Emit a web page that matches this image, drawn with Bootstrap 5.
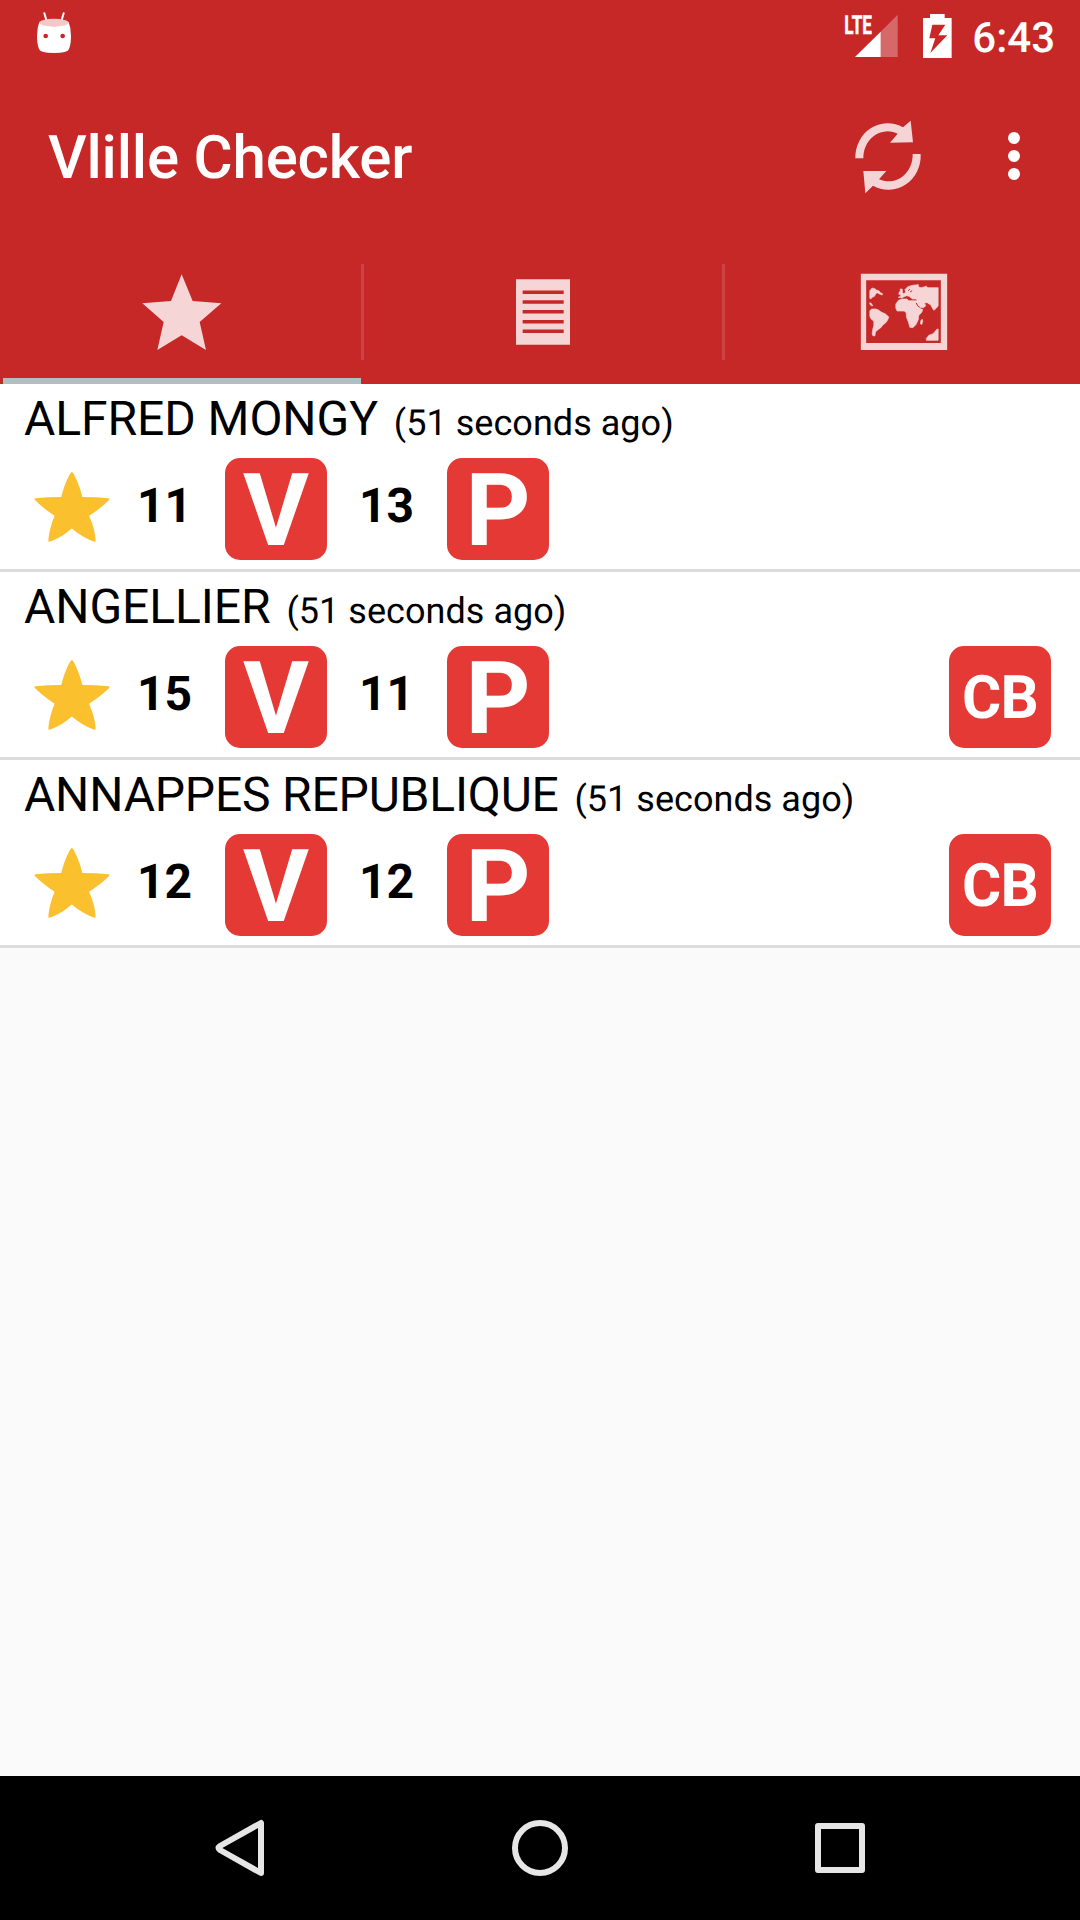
<!DOCTYPE html>
<html lang="en">
<head>
<meta charset="utf-8">
<meta name="viewport" content="width=device-width, initial-scale=1">
<title>Vlille Checker</title>
<link href="https://cdn.jsdelivr.net/npm/bootstrap@5.3.0/dist/css/bootstrap.min.css" rel="stylesheet">
<style>
  body { font-family: Roboto, "Noto Sans", sans-serif; background: #fafafa; color: #000; width: 1080px; height: 1920px; overflow: hidden; text-rendering: geometricPrecision; }
  svg { display: block; flex: none; overflow: visible; }
  .app-head { background: #c62828; color: #fff; height: 384px; }
  .status-bar { height: 72px; padding: 11px 25px 0 35px; }
  .status-right { padding-top: 3px; }
  .clock { font-size: 42px; font-weight: 500; line-height: 49px; margin-left: 21px; }
  .batt { margin-left: 25px; }
  .app-bar { height: 168px; padding: 0 60px 0 48px; }
  .app-title { font-size: 60px; font-weight: 500; line-height: 70px; margin-top: 4px; letter-spacing: -.2px; }
  .bar-actions { gap: 85px; }
  .tab-strip { height: 144px; padding-left: 3px; overflow: hidden; }
  .tab-item { flex: 0 0 358px; height: 144px; border-bottom: 6px solid transparent; }
  .tab-item.current { border-bottom-color: #b0bec5; }
  .tab-sep { flex: 0 0 3px; height: 96px; margin-top: 24px; background: rgba(255,255,255,.13); }
  .station-list .station { height: 188px; background: #fff; border: 0; border-bottom: 3px solid #dcdcdc; padding: 0 29px 0 24px; color: #000; border-radius: 0; }
  .station-name { font-size: 48px; line-height: 69px; height: 74px; white-space: nowrap; letter-spacing: -.06px; }
  .long-name { letter-spacing: -.19px; }
  .ago { font-size: 36px; margin-left: 4px; letter-spacing: .04px; }
  .fav { margin: 14px 0 0 10px; }
  .count { font-size: 48px; font-weight: 700; line-height: 95px; width: 88px; margin-left: 27px; }
  .count-b { margin-left: 32px; }
  .tile { width: 102px; height: 102px; border-radius: 15px; background: #e53935; color: #fff; font-weight: 700; font-size: 101px; line-height: 105px; text-align: center; }
  .tile-cb { font-size: 60px; line-height: 104px; letter-spacing: -.7px; }
  .nav-keys { height: 144px; background: #000; }
</style>
</head>
<body class="d-flex flex-column m-0">
<svg width="0" height="0" class="position-absolute" aria-hidden="true">
  <symbol id="fav-star" viewBox="102 273 227 211"><path fill="#fbc02d" d="M215 273Q218 273 222 281Q236 308 247 348Q290 348 326 352Q330 354 328 357Q306 380 267 405Q285 445 287 481Q285 485 279 482Q246 469 215 443Q185 469 152 482Q145 485 144 481Q147 443 163 405Q125 380 103 357Q100 354 105 352Q141 348 183 348Q193 308 208 281Q212 273 215 273Z"/></symbol>
</svg>
<header class="app-head">
  <div class="status-bar d-flex justify-content-between align-items-start">
    <svg width="38" height="43.33" viewBox="105 33 114 130"><path d="M133 40L140 64M191 40L184 64" stroke="#fff" stroke-width="6" stroke-linecap="round"/><path fill="#fff" d="M118 66Q162 92 206 66Q213 84 213 107Q213 133 207 147Q204 159 162 159Q120 159 117 147Q111 133 111 107Q111 84 118 66Z"/><ellipse cx="162" cy="68" rx="44" ry="11.5" fill="#f2c9c9"/><circle cx="137" cy="108" r="7" fill="#c62828"/><circle cx="188" cy="108" r="7" fill="#c62828"/></svg>
    <div class="status-right d-flex align-items-start">
      <svg width="53.33" height="44" viewBox="73 42 160 132"><path fill="#fff" opacity=".3" d="M183 95L234 44V171H183Z"/><path fill="#fff" d="M106 171L183 95V171Z"/><text x="74" y="101" fill="#fff" stroke="#fff" stroke-width="1.500" font-family="Roboto, sans-serif" font-weight="700" font-size="78" textLength="83" lengthAdjust="spacingAndGlyphs">LTE</text></svg>
      <svg class="batt" width="28.67" height="44" viewBox="309 42 86 132"><path fill="#fff" fill-rule="evenodd" d="M330 42H374V54H395V174H309V54H330ZM337 74L328 115H346L331 159L382 106H355L376 74Z"/></svg>
      <span class="clock">6:43</span>
    </div>
  </div>
  <div class="app-bar navbar flex-nowrap justify-content-between">
    <h1 class="app-title mb-0">Vlille Checker</h1>
    <div class="bar-actions d-flex align-items-center">
      <svg width="70" height="76.67" viewBox="100 355 210 230" fill="#f4d4d4"><path d="M107 476A97 102 0 0 1 250 383L273 363L280 428L211 429L234 402A73 79 0 0 0 131 476Z"/><path d="M303 463A97 102 0 0 1 160 558L137 581L131 514L200 514L178 539A73 79 0 0 0 279 463Z"/></svg>
      <svg width="12" height="48" viewBox="0 0 12 48" fill="#fff"><circle cx="6" cy="6" r="6"/><circle cx="6" cy="24" r="6"/><circle cx="6" cy="42" r="6"/></svg>
    </div>
  </div>
  <nav class="tab-strip d-flex">
    <div class="tab-item current d-flex justify-content-center">
      <svg width="119.33" height="138" viewBox="367 -1 358 414" fill="#f5d5d6"><path d="M546 102L579 182L665 189L600 245L619 329L546 285L473 329L492 245L428 189L514 182Z"/></svg>
    </div>
    <div class="tab-sep"></div>
    <div class="tab-item d-flex justify-content-center">
      <svg width="60" height="138" viewBox="99 -30 180 414"><path fill="#f5d5d6" d="M108 88H270V284H108Z"/><path d="M128 127H251M128 156H251M128 185.500H251M128 215H251M128 244H251" stroke="#c62828" stroke-width="10.500"/></svg>
    </div>
    <div class="tab-sep"></div>
    <div class="tab-item d-flex justify-content-center">
      <svg width="90" height="138" viewBox="57.500 -60 270 414"><path fill="#f5d5d6" fill-rule="evenodd" d="M63 41H322V270H63ZM79 61V249H303V61Z"/><g fill="#f5d5d6" stroke="#f5d5d6" stroke-width="2" stroke-linejoin="round"><path d="M90 92L97 84L105 86L111 91L117 92L122 98L128 101L127 105L117 101L112 98L107 103L104 109L97 112L93 117L90 115Z"/><path d="M90 128L94 130L99 137L95 137L90 133Z"/><path d="M90 152L96 147L108 147L116 150L124 156L137 162L147 171L143 181L137 189L130 194L122 204L114 209L107 216L105 228L99 227L97 221L99 207L102 196V184L93 176L90 169Z"/><path d="M175 112L183 109L182 104L177 103L178 96L182 94L181 87L187 87L188 98L192 101L198 96L195 89L204 80L218 76L236 74L235 80L244 83L260 79L264 83L295 83V137L290 144L282 151L277 143L273 135L262 128L253 129L258 137L251 143L243 142L240 145L249 149L245 158L237 166L235 180L228 194L219 203L210 202L206 187L200 172L199 158L193 153H172L168 145V132L176 121L187 117L201 117L207 122L230 122L231 117L218 117L208 109L200 107L191 111L187 114Z"/><path d="M243 182L247 178L249 183L246 193L242 192Z"/><path d="M259 236L267 226L280 221L291 208L295 207V241H260Z"/></g><path d="M205 92L210 88M211 96L217 92M229 129L235 139L240 142" fill="none" stroke="#c62828" stroke-width="3"/></svg>
    </div>
  </nav>
</header>
<main class="station-list list-group rounded-0 flex-grow-1">
  <section class="station list-group-item">
    <div class="station-name">ALFRED MONGY <span class="ago">(51 seconds ago)</span></div>
    <div class="d-flex align-items-start">
      <svg class="fav" width="76" height="70"><use href="#fav-star"/></svg>
      <span class="count">11</span><span class="tile">V</span>
      <span class="count count-b">13</span><span class="tile">P</span>
    </div>
  </section>
  <section class="station list-group-item">
    <div class="station-name">ANGELLIER <span class="ago">(51 seconds ago)</span></div>
    <div class="d-flex align-items-start">
      <svg class="fav" width="76" height="70"><use href="#fav-star"/></svg>
      <span class="count">15</span><span class="tile">V</span>
      <span class="count count-b">11</span><span class="tile">P</span>
      <span class="tile tile-cb ms-auto">CB</span>
    </div>
  </section>
  <section class="station list-group-item">
    <div class="station-name long-name">ANNAPPES REPUBLIQUE <span class="ago">(51 seconds ago)</span></div>
    <div class="d-flex align-items-start">
      <svg class="fav" width="76" height="70"><use href="#fav-star"/></svg>
      <span class="count">12</span><span class="tile">V</span>
      <span class="count count-b">12</span><span class="tile">P</span>
      <span class="tile tile-cb ms-auto">CB</span>
    </div>
  </section>
</main>
<footer class="nav-keys d-flex justify-content-center align-items-center">
  <svg width="650" height="56" viewBox="215 1820 650 56" fill="none" stroke="#e6e6e6" stroke-width="6" stroke-linejoin="round"><path d="M261 1823V1873L220 1850Q217 1848 220 1846Z"/><circle cx="540" cy="1848" r="25"/><rect x="818" y="1826" width="44" height="44"/></svg>
</footer>
<script src="https://cdn.jsdelivr.net/npm/bootstrap@5.3.0/dist/js/bootstrap.bundle.min.js"></script>
</body>
</html>
